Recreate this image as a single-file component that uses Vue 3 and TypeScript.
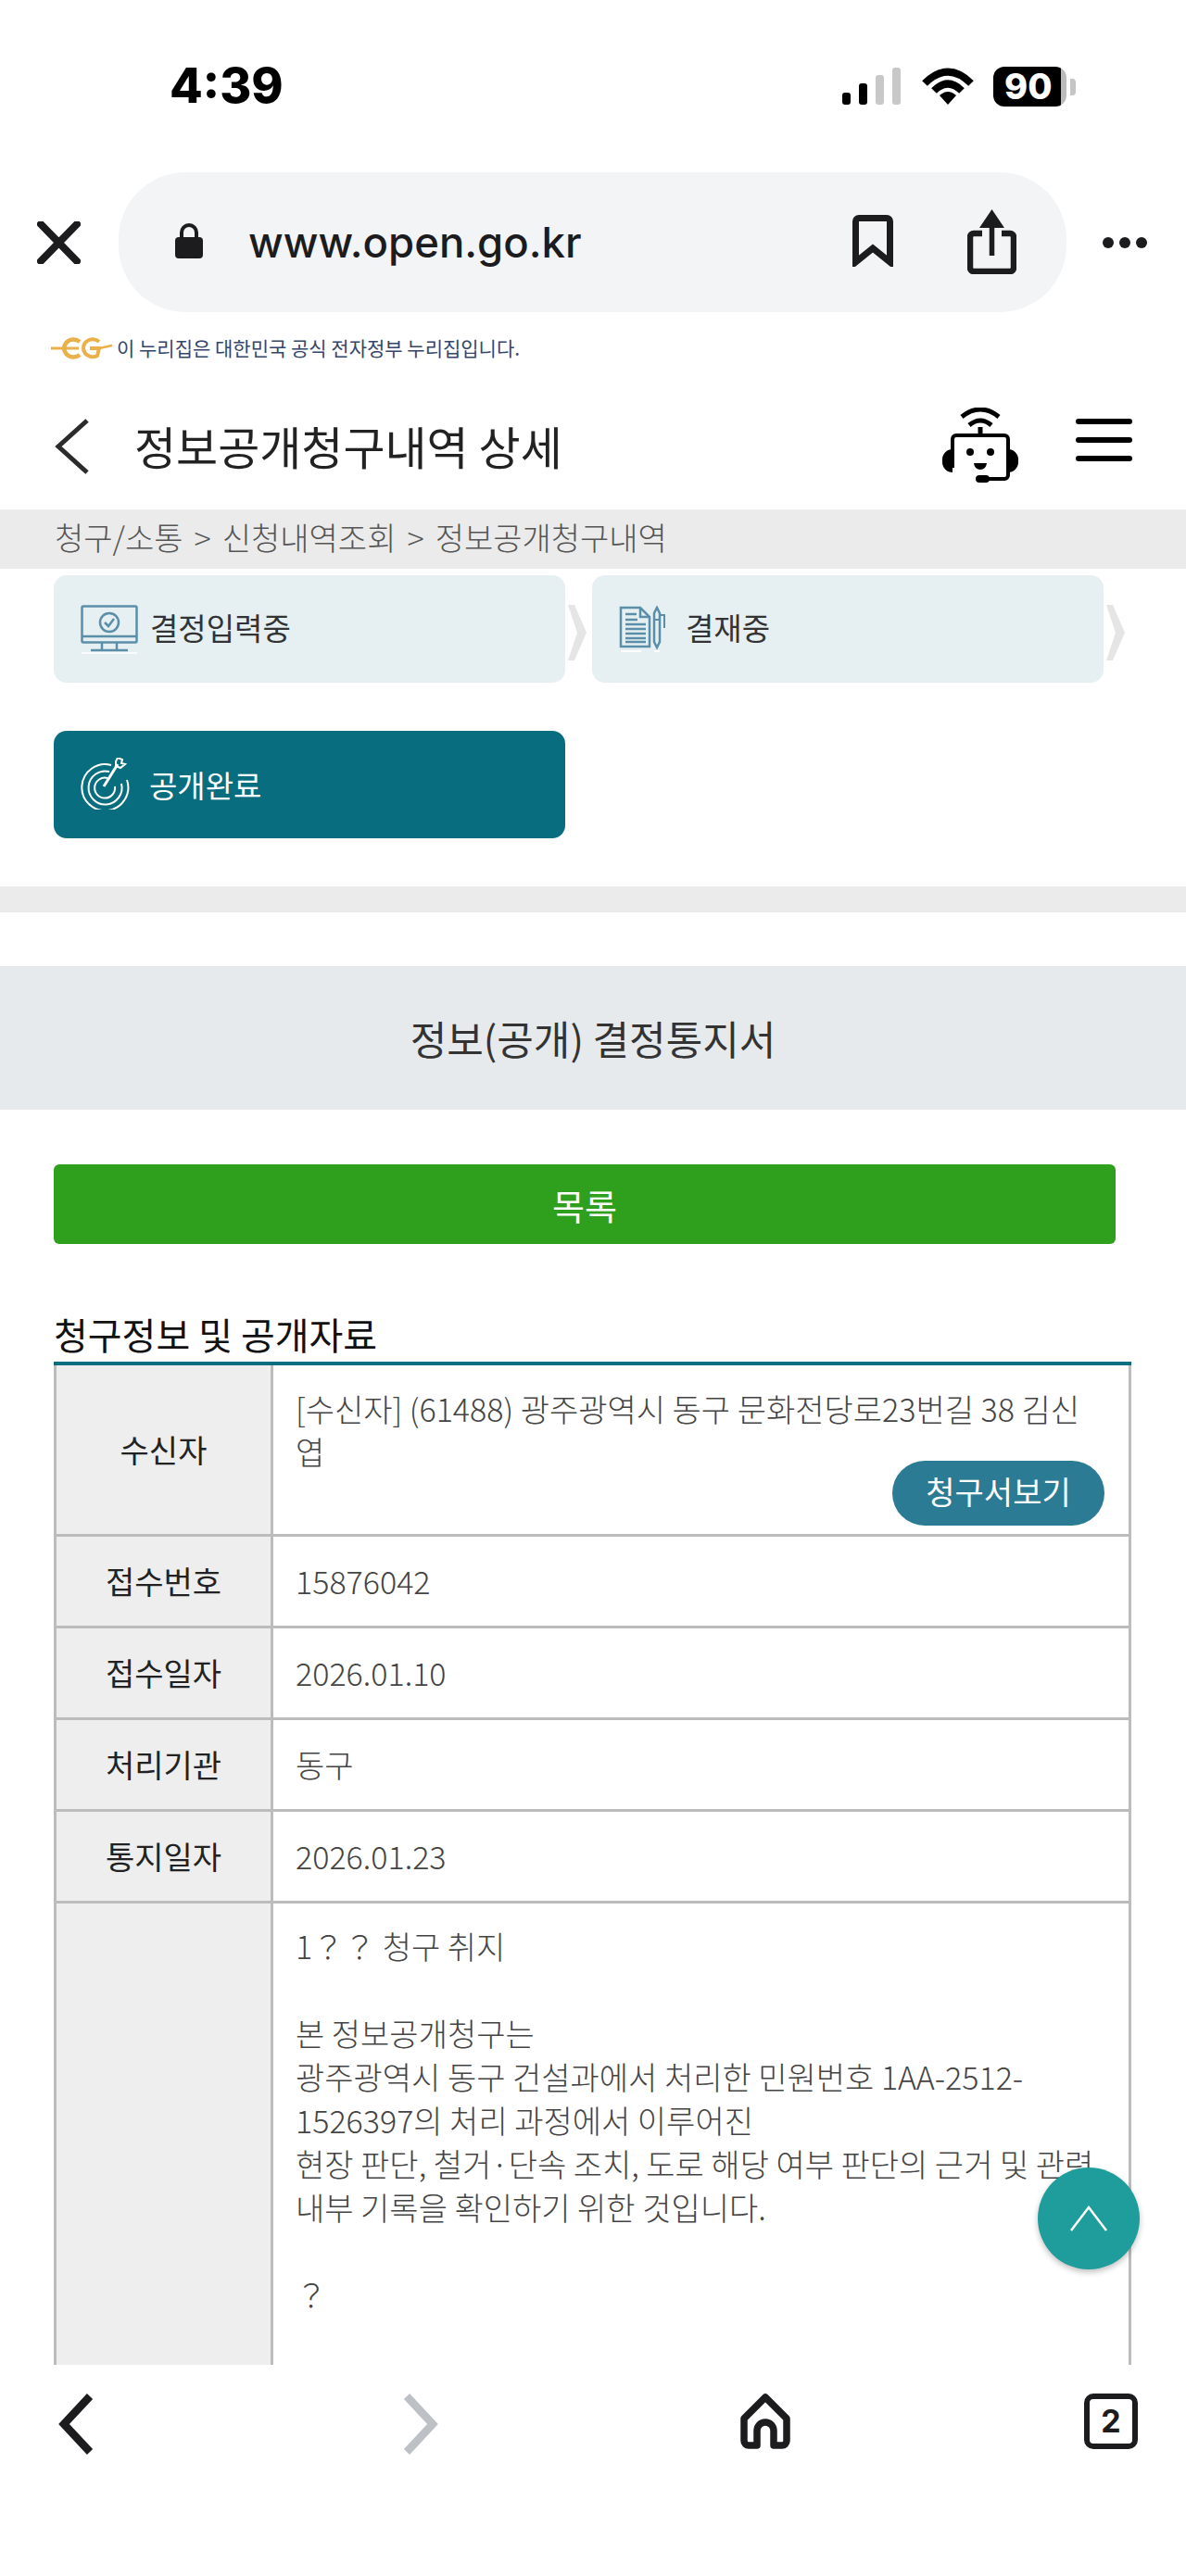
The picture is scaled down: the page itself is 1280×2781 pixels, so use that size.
<script setup lang="ts">
interface Row { label: string; value: string; button?: boolean; tall?: boolean }
const rows: Row[] = [
  { label: '수신자', value: '[수신자] (61488) 광주광역시 동구 문화전당로23번길 38 김신엽', button: true },
  { label: '접수번호', value: '15876042' },
  { label: '접수일자', value: '2026.01.10' },
  { label: '처리기관', value: '동구' },
  { label: '통지일자', value: '2026.01.23' },
  { label: '', tall: true, value: '1？？ 청구 취지\n\n본 정보공개청구는\n광주광역시 동구 건설과에서 처리한 민원번호 1AA-2512-1526397의 처리 과정에서 이루어진\n현장 판단, 철거·단속 조치, 도로 해당 여부 판단의 근거 및 관련\n내부 기록을 확인하기 위한 것입니다.\n\n？\n\n\n' },
]
</script>

<template>
  <div class="phone">
    <div class="status">
      <span class="time">4:39</span>
      <div class="status-right">
        <svg width="63" height="40" viewBox="0 0 63 40">
          <rect x="0" y="27" width="9" height="13" rx="3" fill="#000" />
          <rect x="18" y="17" width="9" height="23" rx="3" fill="#000" />
          <rect x="36" y="8" width="9" height="32" rx="3" fill="#c8c8c8" />
          <rect x="54" y="0" width="9" height="40" rx="3" fill="#c8c8c8" />
        </svg>
        <svg width="56" height="40" viewBox="0 0 56 40">
          <path d="M3 17 Q28 -8 53 17" fill="none" stroke="#000" stroke-width="8" />
          <path d="M13 25 Q28 10 43 25" fill="none" stroke="#000" stroke-width="8" />
          <path d="M19 30 Q28 22 37 30 L28 40 Z" fill="#000" />
        </svg>
        <div class="battery"><span>90</span></div>
        <div class="nub"></div>
      </div>
    </div>

    <div class="toolbar">
      <svg class="close" width="47" height="46" viewBox="0 0 47 46">
        <path d="M4 3 L43 43 M43 3 L4 43" stroke="#1c1c1e" stroke-width="8" stroke-linecap="round" />
      </svg>
      <div class="urlbar">
        <svg class="lock" width="32" height="38" viewBox="0 0 32 38">
          <path d="M8 17 V10 a8 8 0 0 1 16 0 V17" fill="none" stroke="#1c1c1e" stroke-width="4" />
          <rect x="1" y="15" width="30" height="23" rx="4" fill="#1c1c1e" />
        </svg>
        <span class="url">www.open.go.kr</span>
        <svg class="bookmark" width="44" height="56" viewBox="0 0 44 56">
          <path d="M3.500 51 V7 a3.500 3.500 0 0 1 3.500-3.500 H37 a3.500 3.500 0 0 1 3.500 3.500 V51 L22 36 Z" fill="none" stroke="#1c1c1e" stroke-width="7" />
        </svg>
        <svg class="share" width="53" height="70" viewBox="0 0 53 70">
          <path d="M16 26 H7 a4 4 0 0 0-4 4 V63 a4 4 0 0 0 4 4 H46 a4 4 0 0 0 4-4 V30 a4 4 0 0 0-4-4 H37" fill="none" stroke="#1c1c1e" stroke-width="6.500" />
          <path d="M26.500 12 V50" stroke="#1c1c1e" stroke-width="5.500" />
          <path d="M26.500 0 L40 20 H13 Z" fill="#1c1c1e" />
        </svg>
      </div>
      <div class="dots"><i></i><i></i><i></i></div>
    </div>

    <div class="gov">
      <svg width="66" height="24" viewBox="0 0 66 24">
        <path d="M0 12 H30" stroke="#eab04a" stroke-width="3" fill="none" />
        <path d="M31 5 A10 9.500 0 1 0 31 19" stroke="#eab04a" stroke-width="4.500" fill="none" />
        <path d="M52 5 A10 9.500 0 1 0 50 20 L52 12 H42" stroke="#eab04a" stroke-width="4" fill="none" />
        <path d="M52 12 L66 9" stroke="#eab04a" stroke-width="2.500" fill="none" />
      </svg>
      <span>이 누리집은 대한민국 공식 전자정부 누리집입니다.</span>
    </div>

    <div class="content">
      <header class="head">
        <svg class="back" width="38" height="60" viewBox="0 0 38 60">
          <path d="M35 2 L4 30 L35 58" fill="none" stroke="#2b2b2b" stroke-width="5" />
        </svg>
        <h1>정보공개청구내역 상세</h1>
        <svg class="robot" width="82" height="84" viewBox="0 0 82 84">
          <path d="M21 10 Q41 -6 61 10" fill="none" stroke="#000" stroke-width="5" />
          <path d="M29 19 Q41 9 53 19" fill="none" stroke="#000" stroke-width="5" />
          <path d="M41 21 V28" stroke="#000" stroke-width="5" />
          <path d="M11 65 V34 a4 4 0 0 1 4-4 H67 a4 4 0 0 1 4 4 V73 a4 4 0 0 1-4 4 H40" fill="none" stroke="#000" stroke-width="4" />
          <path d="M11 45 a11 11 0 0 0-11 11 V59 a11 11 0 0 0 11 11 Z M71 45 a11 11 0 0 1 11 11 V59 a11 11 0 0 1-11 11 Z" fill="#000" />
          <circle cx="30" cy="48" r="4" fill="#000" />
          <circle cx="52" cy="48" r="4" fill="#000" />
          <path d="M34 60 H48 Q47 67 41 67 Q35 67 34 60 Z" fill="#000" />
          <rect x="36" y="73" width="15" height="8" rx="4" fill="#000" />
        </svg>
        <div class="burger"><i></i><i></i><i></i></div>
      </header>

      <div class="crumbs">청구/소통 &gt; 신청내역조회 &gt; 정보공개청구내역</div>

      <div class="steps">
        <div class="step next">
          <svg width="62" height="53" viewBox="0 0 62 53">
            <rect x="1.500" y="1.500" width="59" height="39" rx="1.500" fill="none" stroke="#5b8ea8" stroke-width="2.500" />
            <path d="M1 34 H61" stroke="#5b8ea8" stroke-width="2.500" />
            <circle cx="31" cy="19" r="10" fill="none" stroke="#5b8ea8" stroke-width="2.500" />
            <path d="M26 19 L30 23 L36 15" fill="none" stroke="#5b8ea8" stroke-width="2.500" />
            <path d="M23 41 V48 M39 41 V48 M11 49 H51" stroke="#5b8ea8" stroke-width="2.500" />
            <path d="M1 52 H61" stroke="#fff" stroke-width="1.500" />
          </svg>
          <span>결정입력중</span>
        </div>
        <div class="step next">
          <svg width="50" height="50" viewBox="0 0 50 50">
            <path d="M2 2 H23 L33 12 V44 H2 Z" fill="none" stroke="#5b8ea8" stroke-width="2.500" />
            <path d="M23 2 V12 H33" fill="none" stroke="#5b8ea8" stroke-width="2.500" />
            <path d="M7 9 H19 M7 15 H20 M7 20 H29 M7 25 H29 M7 30 H29 M7 35 H29 M7 39 H29" stroke="#5b8ea8" stroke-width="2.500" />
            <path d="M38 8 L41 2 L44 8 V39 L41 45 L38 39 Z" fill="none" stroke="#5b8ea8" stroke-width="2.500" />
            <path d="M38 15 H44 M44 10 H49 V24" fill="none" stroke="#5b8ea8" stroke-width="2" />
            <path d="M2 49 H24 M38 49 H44" stroke="#fff" stroke-width="2" />
          </svg>
          <span class="gap">결재중</span>
        </div>
        <div class="step done">
          <svg width="54" height="56" viewBox="0 0 54 56">
            <g fill="none" stroke="#fff" stroke-width="2">
              <path d="M33 8 A25 25 0 1 0 50 24" />
              <path d="M31 15 A18 18 0 1 0 44 28" />
              <path d="M29 22 A11 11 0 1 0 37 31" />
              <path d="M25 31 L40 7" stroke-width="3" />
              <path d="M38 4 L40 0 L45 2 L44 6 L48 7 L43 11 L38 9 Z" />
            </g>
          </svg>
          <span>공개완료</span>
        </div>
      </div>

      <div class="divider"></div>
      <div class="band">정보(공개) 결정통지서</div>
      <button class="list-btn">목록</button>
      <h2>청구정보 및 공개자료</h2>

      <table class="info">
        <tbody>
          <tr v-for="row in rows" :key="row.label" :class="{ first: row.button }">
            <th>{{ row.label }}</th>
            <td :class="{ body: row.tall }">
              {{ row.value }}
              <div v-if="row.button" class="btn-wrap"><span class="view-btn">청구서보기</span></div>
            </td>
          </tr>
        </tbody>
      </table>

      <div class="fab">
        <svg width="42" height="30" viewBox="0 0 42 30">
          <path d="M2 28 L21 3 L40 28" fill="none" stroke="#fff" stroke-width="2.500" />
        </svg>
      </div>
    </div>

    <nav class="bottom">
      <svg width="40" height="66" viewBox="0 0 40 66">
        <path d="M35 3 L7 33 L35 63" fill="none" stroke="#1c1c1e" stroke-width="8.500" />
      </svg>
      <svg width="40" height="66" viewBox="0 0 40 66">
        <path d="M5 3 L33 33 L5 63" fill="none" stroke="#bdc1c6" stroke-width="8.500" />
      </svg>
      <svg width="54" height="60" viewBox="0 0 54 60">
        <path d="M27 4 L50 27 V51 a5 5 0 0 1-5 5 H36 V40 a9 9 0 0 0-18 0 V56 H9 a5 5 0 0 1-5-5 V27 Z" fill="none" stroke="#1c1c1e" stroke-width="7.500" stroke-linejoin="round" />
      </svg>
      <div class="tabs">2</div>
    </nav>
  </div>
</template>

<style>
html, body { margin: 0; background: #fff; }
</style>

<style scoped>
.phone {
  width: 1280px;
  height: 2781px;
  display: flex;
  flex-direction: column;
  overflow: hidden;
  background: #fff;
  font-family: "Noto Sans CJK KR", "Noto Sans", sans-serif;
}
.status {
  height: 186px;
  flex: none;
  display: flex;
  justify-content: space-between;
  padding: 68px 119px 0 183px;
  box-sizing: border-box;
}
.time {
  font-family: Inter, "Liberation Sans", sans-serif;
  font-weight: 800;
  font-size: 52px;
  line-height: 50px;
  color: #000;
}
.status-right { display: flex; align-items: flex-start; height: 44px; padding-top: 5px; }
.status-right svg:first-child { margin-right: 23px; }
.status-right svg:nth-child(2) { margin-right: 21px; }
.battery {
  width: 79px;
  height: 43px;
  margin-top: -1px;
  border-radius: 12px;
  background: linear-gradient(90deg, #000 0 92%, #bbb 92%);
  color: #fff;
  font: 800 38px/43px Inter, "Liberation Sans", sans-serif;
  padding-left: 12px;
  box-sizing: border-box;
}
.nub { width: 6px; height: 18px; background: #c4c4c4; border-radius: 0 4px 4px 0; margin: 12px 0 0 4px; }
.toolbar { height: 151px; flex: none; position: relative; display: flex; align-items: center; }
.close { margin-left: 40px; margin-right: 41px; flex: none; }
.urlbar {
  width: 1023px;
  height: 151px;
  border-radius: 72px;
  background: #f3f4f6;
  display: flex;
  align-items: center;
  flex: none;
}
.lock { margin-left: 60px; flex: none; margin-top: -3px; }
.url {
  margin-left: 48px;
  font: 500 45.500px/56px Inter, "Liberation Sans", sans-serif;
  color: #1c1c1e;
  flex: 1;
}
.bookmark { margin-right: 80px; flex: none; margin-top: -4px; }
.share { margin-right: 54px; flex: none; margin-top: -2px; }
.dots { display: flex; gap: 6px; margin-left: 39px; margin-top: 0; }
.dots i { width: 12px; height: 12px; border-radius: 50%; background: #1c1c1e; display: block; }
.gov {
  height: 78px;
  flex: none;
  box-sizing: border-box;
  padding: 24px 0 0 55px;
  display: flex;
  align-items: flex-start;
  gap: 5px;
  color: #34466b;
  font-size: 21px;
  line-height: 28px;
  font-weight: 400;
}
.gov svg { margin-top: 3px; flex: none; }
.content { flex: 1; min-height: 0; position: relative; overflow: hidden; }
.head { height: 135px; display: flex; align-items: center; position: relative; }
.back { margin-left: 59px; margin-right: 48px; flex: none; margin-top: -1px; }
.head h1 { margin: -4px 0 0; font-size: 49px; font-weight: 400; color: #222; line-height: 60px; flex: 1; }
.robot { flex: none; margin-right: 62px; margin-top: -2px; }
.burger { width: 61px; margin-right: 58px; display: flex; flex-direction: column; gap: 14px; margin-top: -15px; }
.burger i { display: block; height: 6px; border-radius: 3px; background: #000; }
.crumbs {
  height: 64px;
  background: #ebebeb;
  padding-left: 59px;
  font-size: 34px;
  word-spacing: 4.500px;
  line-height: 60px;
  color: #555;
  font-weight: 300;
}
.steps {
  display: grid;
  grid-template-columns: 552px 552px;
  column-gap: 29px;
  row-gap: 52px;
  padding: 7px 0 0 58px;
}
.step {
  height: 116px;
  border-radius: 14px;
  background: #e6eff1;
  color: #333;
  display: flex;
  align-items: center;
  padding-left: 29px;
  font-size: 33px;
  position: relative;
}
.step svg { flex: none; margin-right: 13px; }
.step span { line-height: 40px; margin-top: -4px; }
.step .gap { margin-left: 9px; }
.step.done { background: #086d7e; color: #fff; }
.step.done span { margin-top: 0; }
.step.done svg { margin-right: 20px; margin-top: -2px; }
.step.next::after {
  content: "";
  position: absolute;
  left: 555px;
  top: 32px;
  width: 20px;
  height: 60px;
  background: #e5e5e5;
  clip-path: polygon(0 0, 7px 0, 20px 50%, 7px 100%, 0 100%, 10px 50%);
}
.divider { height: 28px; margin-top: 52px; background: #ebebeb; }
.band {
  height: 155px;
  margin-top: 58px;
  background: #e7eaed;
  text-align: center;
  font-size: 43px;
  line-height: 155px;
  color: #333;
}
.list-btn {
  display: block;
  width: 1146px;
  height: 86px;
  margin: 59px 0 0 58px;
  border: 0;
  border-radius: 6px;
  background: #2fa01d;
  color: #fff;
  font-family: inherit;
  font-size: 38px;
  padding: 0;
}
h2 {
  margin: 67px 0 0 58px;
  font-size: 40px;
  line-height: 60px;
  font-weight: 400;
  color: #111;
  height: 60px;
}
.info {
  width: 1163px;
  margin-left: 58px;
  border-collapse: collapse;
  table-layout: fixed;
  border-top: 4px solid #086d7e;
  margin-top: 0;
}
.info th, .info td {
  border: 3px solid #bcbcbc;
  font-size: 34px;
  box-sizing: border-box;
  height: 99px;
}
.info tr:first-child th, .info tr:first-child td { border-top: 0; height: 185px; }
.info th {
  width: 234px;
  background: #eee;
  font-weight: 400;
  color: #222;
  padding: 0;
}
.info td {
  padding: 0 30px 0 24px;
  font-weight: 300;
  color: #444;
  line-height: 46px;
  word-break: break-all;
}
.first td { vertical-align: top; padding-top: 24px; }
.first th { vertical-align: middle; }
.info td.body { white-space: pre-line; word-break: normal; overflow-wrap: anywhere; vertical-align: top; padding-top: 22px; line-height: 47px; }
.btn-wrap { display: flex; justify-content: flex-end; margin-top: -13px; margin-right: -4px; }
.view-btn {
  width: 229px;
  height: 70px;
  border-radius: 35px;
  background: #2a7b93;
  color: #fff;
  text-align: center;
  line-height: 66px;
  font-size: 34px;
  font-weight: 400;
}
.fab {
  position: absolute;
  left: 1120px;
  top: 1925px;
  width: 110px;
  height: 110px;
  border-radius: 50%;
  background: #1f9d9c;
  box-shadow: 0 3px 6px rgba(0,0,0,.25);
  display: flex;
  align-items: center;
  justify-content: center;
}
.bottom {
  height: 228px;
  flex: none;
  box-sizing: border-box;
  background: #fff;
  position: relative;
  display: grid;
  grid-template-columns: 372px 365px 371px auto;
  padding: 31px 0 0 62px;
  align-items: start;
}
.tabs {
  width: 58px;
  height: 60px;
  box-sizing: border-box;
  border: 6px solid #1c1c1e;
  border-radius: 10px;
  font: 700 34px/48px Inter, "Liberation Sans", sans-serif;
  text-align: center;
  color: #1c1c1e;
}
</style>
